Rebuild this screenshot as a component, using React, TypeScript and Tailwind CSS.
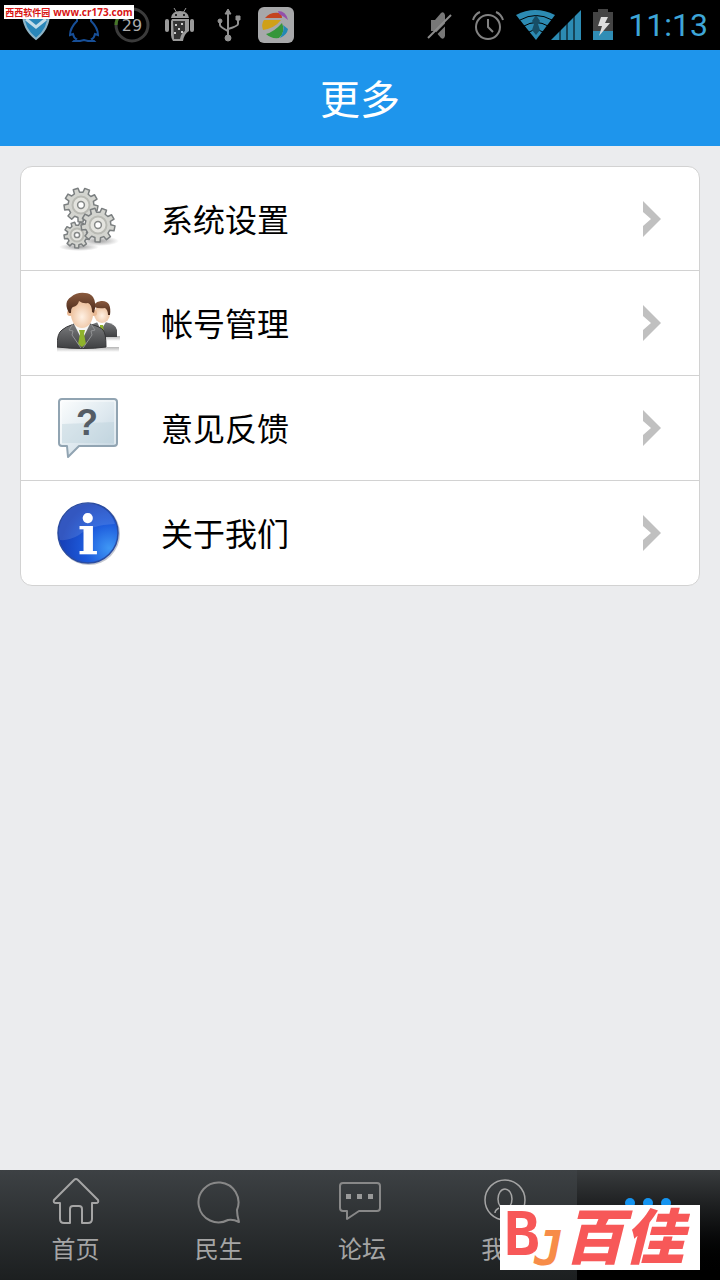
import type { ReactNode } from "react";

interface MenuEntry {
  label: string;
  icon: ReactNode;
}

interface TabEntry {
  label: string;
  icon: ReactNode;
}

function gearPath(cx: number, cy: number, outer: number, inner: number, teeth: number) {
  const step = (Math.PI * 2) / teeth;
  const points: string[] = [];
  for (let i = 0; i < teeth; i++) {
    const base = i * step + 0.2;
    [
      [inner, -0.31],
      [outer, -0.21],
      [outer, 0.21],
      [inner, 0.31],
    ].forEach(([r, part]) => {
      const a = base + part * step;
      points.push(`${(cx + r * Math.cos(a)).toFixed(1)} ${(cy + r * Math.sin(a)).toFixed(1)}`);
    });
  }
  return `M${points.join("L")}Z`;
}

function Gear({ cx, cy, r }: { cx: number; cy: number; r: number }) {
  return (
    <g>
      <path d={gearPath(cx, cy, r, r * 0.76, 9)} fill="#d3d4cf" stroke="#7b7f80" strokeWidth="1.5" strokeLinejoin="round" />
      <circle cx={cx} cy={cy} r={r * 0.5} fill="#e4e4df" stroke="#b9bab4" strokeWidth="2" />
      <circle cx={cx} cy={cy} r={r * 0.2} fill="#fff" stroke="#858887" strokeWidth="1.5" />
    </g>
  );
}

function SettingsIcon() {
  return (
    <svg className="h-16 w-16 shrink-0" viewBox="0 0 64 64">
      <defs>
        <radialGradient id="gearShadow">
          <stop offset="0" stopColor="#777" stopOpacity="0.7" />
          <stop offset="1" stopColor="#777" stopOpacity="0" />
        </radialGradient>
      </defs>
      <ellipse cx="22" cy="60" rx="20" ry="4" fill="url(#gearShadow)" />
      <ellipse cx="42" cy="54" rx="20" ry="5" fill="url(#gearShadow)" />
      <Gear cx={24} cy={18} r={17} />
      <Gear cx={20} cy={48} r={13} />
      <Gear cx={41} cy={38} r={17} />
    </svg>
  );
}

function AccountIcon() {
  return (
    <svg className="h-16 w-16 shrink-0" viewBox="0 0 64 64">
      <defs>
        <linearGradient id="suit" x1="0" y1="0" x2="0" y2="1">
          <stop offset="0" stopColor="#7a7b7d" />
          <stop offset="1" stopColor="#3f4042" />
        </linearGradient>
        <radialGradient id="skin" cx="0.5" cy="0.6">
          <stop offset="0" stopColor="#fff1e4" />
          <stop offset="1" stopColor="#eec4a2" />
        </radialGradient>
        <linearGradient id="hair" x1="0" y1="0" x2="0" y2="1">
          <stop offset="0" stopColor="#8a5a3e" />
          <stop offset="1" stopColor="#4a2a1b" />
        </linearGradient>
        <linearGradient id="floor" x1="0" y1="0" x2="0" y2="1">
          <stop offset="0" stopColor="#b5b5b5" />
          <stop offset="1" stopColor="#fff" />
        </linearGradient>
      </defs>
      <rect x="40" y="45" width="23" height="5" fill="url(#floor)" />
      <rect x="0" y="56" width="62" height="5" fill="url(#floor)" />
      <path d="M32 46V38q2-5 9-7h7q11 2 12 8v7Z" fill="url(#suit)" />
      <path d="m40 31 4 8 5-8Z" fill="#fff" />
      <path d="m43 34 3 0 1 9-4 1Z" fill="#8fb32c" />
      <ellipse cx="45" cy="23" rx="8" ry="9" fill="url(#skin)" />
      <path d="M37 20q-2-9 7-10 11-1 9 14l-2 0q0-5-3-7-6 1-11-1Z" fill="url(#hair)" />
      <path d="M0 56q0-14 5-17 3-3 12-6h16q11 3 13 6 3 3 3 17-22 3-49 0Z" fill="url(#suit)" stroke="#363638" />
      <path d="m17 33 8 16 8-16Z" fill="#f7f7f5" />
      <path d="m22 39 6 0-1 4 2 10-4 3-4-3 2-10Z" fill="#8fb32c" />
      <path d="m16 33-4 6 4 1-1 4 9 13M34 33l4 6-4 1 1 4-9 13" fill="none" stroke="#929395" />
      <circle cx="13" cy="22" r="3" fill="#e9b994" />
      <circle cx="37" cy="22" r="3" fill="#e9b994" />
      <ellipse cx="25" cy="23" rx="11" ry="14" fill="url(#skin)" />
      <path d="M12 22Q6 11 14 6q6-5 14-4 5 0 8 4 4 6 1 16l-2-1q0-7-4-9-5 1-9-2-1 5-6 6-2 1-2 6Z" fill="url(#hair)" />
    </svg>
  );
}

function FeedbackIcon() {
  return (
    <svg className="h-16 w-16 shrink-0" viewBox="0 0 64 64">
      <defs>
        <linearGradient id="bubble" x1="0" y1="0" x2="1" y2="1">
          <stop offset="0" stopColor="#fdfefe" />
          <stop offset="0.5" stopColor="#e0eaf0" />
          <stop offset="1" stopColor="#bfd2de" />
        </linearGradient>
      </defs>
      <path
        d="M5 3h52q3 0 3 3v41q0 3-3 3H22L11 61l-1-11H5q-3 0-3-3V6q0-3 3-3Z"
        fill="url(#bubble)"
        stroke="#91a4b2"
        strokeWidth="2"
        strokeLinejoin="round"
      />
      <path d="M5 28q26-1 52-2v21H5Z" fill="#b9cfda" opacity="0.4" />
      <path d="M4 48V5h54v43" fill="none" stroke="#fff" opacity="0.8" />
      <text x="30" y="39" textAnchor="middle" fill="#555d66" className="font-['Liberation_Sans',sans-serif] text-[36px] font-bold">
        ?
      </text>
    </svg>
  );
}

function AboutIcon() {
  return (
    <svg className="h-16 w-16 shrink-0 overflow-visible" viewBox="0 0 64 64">
      <defs>
        <radialGradient id="ball" cx="0.85" cy="0.75" r="0.8">
          <stop offset="0" stopColor="#3f97f5" />
          <stop offset="0.5" stopColor="#1d5bdc" />
          <stop offset="1" stopColor="#1740b8" />
        </radialGradient>
      </defs>
      <circle cx="32" cy="33" r="31" fill="#c3c6cf" />
      <circle cx="31" cy="32" r="30" fill="url(#ball)" stroke="#2b4ca0" strokeWidth="1.5" />
      <path d="M3 39A28 28 0 0 1 58 23Q34 24 22 34 12 40 3 39Z" fill="#fff" opacity="0.12" />
      <text x="31" y="53" textAnchor="middle" fill="#fff" className="font-['DejaVu_Serif',serif] text-[54px] font-bold">
        i
      </text>
    </svg>
  );
}

const MENU: MenuEntry[] = [
  { label: "系统设置", icon: <SettingsIcon /> },
  { label: "帐号管理", icon: <AccountIcon /> },
  { label: "意见反馈", icon: <FeedbackIcon /> },
  { label: "关于我们", icon: <AboutIcon /> },
];

const TABS: TabEntry[] = [
  {
    label: "首页",
    icon: (
      <path
        d="M22 3q2-2 4 0l20 20q1 3-2 3h-4v16q0 4-4 4h-6V32q0-3-3-3h-6q-3 0-3 3v14h-6q-4 0-4-4V26H4q-3 0-2-3Z"
        strokeWidth="2"
      />
    ),
  },
  {
    label: "民生",
    icon: <path d="M33 43A20 20 0 1 1 42 33q0 5 2 12-6-3-11-2Z" strokeWidth="2" stroke="#888" />,
  },
  {
    label: "论坛",
    icon: (
      <>
        <path d="M5 6h34q3 0 3 3v22q0 3-3 3H21L9 42v-8H5q-3 0-3-3V9q0-3 3-3Z" strokeWidth="2" stroke="#888" />
        <path d="M8 17h5v5H8zM19 17h5v5h-5zM30 17h5v5h-5z" fill="#999" stroke="none" />
      </>
    ),
  },
  {
    label: "我的",
    icon: (
      <>
        <circle cx="24" cy="23" r="20" />
        <ellipse cx="24" cy="22" rx="7" ry="10" />
        <path d="M14 36q0-3 4-5M34 36q0-3-4-5" />
      </>
    ),
  },
];

function StatusBar() {
  return (
    <div className="flex h-[50px] items-center bg-black px-3">
      <svg className="h-12 w-12" viewBox="0 0 48 48">
        <path d="M24 7q6 5 13 5 0 16-13 26-13-10-13-26 7 0 13-5Z" fill="#2a86b8" stroke="#8eb4c6" strokeWidth="2" />
        <path d="m14 18 10 8 10-8" fill="none" stroke="#c3dce8" strokeWidth="3" />
      </svg>
      <svg className="h-12 w-12" viewBox="0 0 48 48">
        <path
          d="M17 14q0-8 7-8t7 8v6q7 7 7 14l-3-1q-1 4-3 5l2 2h-6l-4-1-4 1h-6l2-2q-2-1-3-5l-3 1q0-7 7-14Z"
          fill="none"
          stroke="#174f98"
          strokeWidth="2"
        />
      </svg>
      <svg className="h-12 w-12" viewBox="0 0 48 48">
        <circle cx="24" cy="24" r="16" fill="none" stroke="#3b3b3b" strokeWidth="3" />
        <path d="M8 24a16 16 0 0 1 5-11" fill="none" stroke="#477828" strokeWidth="3" />
        <text x="24" y="30" textAnchor="middle" fill="#aaa" className="font-['DejaVu_Sans',sans-serif] text-[16px]">
          29
        </text>
      </svg>
      <svg className="h-12 w-12" viewBox="0 0 48 48" fill="#9a9a9a">
        <path d="M15 17q1-7 9-7t9 7Z" />
        <path d="m18 7 3 5M30 7l-3 5" stroke="#9a9a9a" />
        <circle cx="20" cy="14" r="1" fill="#000" />
        <circle cx="28" cy="14" r="1" fill="#000" />
        <rect x="9" y="18" width="4" height="13" rx="2" />
        <rect x="34" y="18" width="4" height="13" rx="2" />
        <path d="M16 18h17v12q-5 3-6 10H17q-2-3-2-6V20Z" />
        <path d="M17 20h12v10q-4 2-5 8h-6Z" fill="#343434" />
        <path d="M19 23h2v2h-2zM25 22h2v2h-2zM22 27h2v2h-2zM18 31h2v2h-2zM25 30h2v2h-2z" fill="#ccc" />
      </svg>
      <svg className="h-12 w-12" viewBox="0 0 48 48" fill="#929292" stroke="#929292">
        <path d="M24 12v24M16 20v4q0 2 8 6M34 18v5q0 2-10 5" fill="none" strokeWidth="2" />
        <path d="m24 8 3 5h-6ZM32 15h4v4h-4z" />
        <circle cx="16" cy="20" r="2" />
        <circle cx="24" cy="37" r="3" />
      </svg>
      <svg className="h-12 w-12" viewBox="0 0 48 48">
        <rect x="6" y="6" width="36" height="36" rx="6" fill="#a7a8aa" />
        <path d="M13 17q5-6 14-5 3 1 3 5Z" fill="#c4441d" />
        <path d="M11 29q-2-6 1-10h17q-6 8-18 10Z" fill="#d0a018" />
        <path d="M14 33q8-2 16-11 4 9-3 15-8 1-13-4Z" fill="#35963a" />
        <path d="M28 37q5-8 3-13l5 4q-1 6-8 9Z" fill="#2189b5" />
        <path d="M26 10q8 0 10 9-5-4-9-6Z" fill="#9350ab" />
      </svg>

      <svg className="ml-auto h-12 w-12" viewBox="0 0 48 48">
        <path d="M15 19h4l6-7q3-2 4 2v21q-1 4-4 2l-6-7h-4Z" fill="#777" />
        <path d="m14 39 23-23" stroke="#000" strokeWidth="2" />
        <path d="m12 37 23-23" stroke="#8b8b8b" strokeWidth="2" />
      </svg>
      <svg className="h-12 w-12" viewBox="0 0 48 48" fill="none" stroke="#828282" strokeWidth="2">
        <circle cx="24" cy="26" r="12" />
        <path d="M24 18v8l5 5M9 19q2-6 7-8M39 19q-2-6-7-8" />
      </svg>
      <svg className="h-12 w-[72px]" viewBox="0 0 72 48">
        <path d="M4 14q19-10 39 0L24 39Z" fill="#2c8bb3" />
        <path d="M8 19q16-9 32 0M12 25q12-7 24 0M17 31q7-4 14 0" fill="none" stroke="#000" />
        <path d="m24 14 4 6-2 3 2 6-4 5-4-5 2-6-2-3Z" fill="#174e66" />
        <path d="m39 39 30-30v30Z" fill="#2c8bb3" />
        <path d="M48 28v11M55 20v19M62 14v25" stroke="#000" />
      </svg>
      <svg className="h-12 w-10" viewBox="0 0 40 48">
        <path d="M14 8h10v3h5v28H9V11h5Z" fill="#444" />
        <path d="M9 30h20v9H9Z" fill="#308db5" />
        <path d="m17 16 7 0-3 6h5l-11 13 3-10h-4Z" fill="#ddd" />
      </svg>
      <span className="pl-1 font-['Roboto',sans-serif] text-[32px] leading-none text-[#3ea6d8]">11:13</span>
    </div>
  );
}

function MenuRow({ label, icon }: MenuEntry) {
  return (
    <li className="group border-b border-[#d2d2d2] last:border-b-0">
      <button
        type="button"
        className="flex h-[104px] w-full items-center gap-10 pr-9 pl-9 text-left group-first:h-[103px]"
      >
        {icon}
        <span className="flex-1 pb-0.5 text-[32px] leading-10 text-black">{label}</span>
        <svg className="h-9 w-5 shrink-0" viewBox="0 0 20 36">
          <path d="M0 0 18 18 0 36V25l8-7-8-7Z" fill="#c0c0c0" />
        </svg>
      </button>
    </li>
  );
}

function TabBar() {
  return (
    <nav className="flex h-[110px] bg-linear-to-b from-[#3d4144] to-[#1c1f20] pl-1">
      {TABS.map((tab) => (
        <button key={tab.label} type="button" className="flex flex-1 flex-col items-center pt-[7px] text-[#a5a5a5]">
          <svg className="h-12 w-12" viewBox="0 0 48 48" fill="none" stroke="#a5a5a5" strokeWidth="1.5" strokeLinejoin="round">
            {tab.icon}
          </svg>
          <span className="text-[24px] leading-[46px]">{tab.label}</span>
        </button>
      ))}
      <button
        type="button"
        aria-label="更多"
        className="flex flex-1 flex-col items-center bg-linear-to-b from-[#393c3e] to-black pt-[7px]"
      >
        <svg className="h-12 w-12" viewBox="0 0 48 48" fill="#1594f0">
          <circle cx="6" cy="26" r="5" />
          <circle cx="24" cy="26" r="5" />
          <circle cx="42" cy="26" r="5" />
        </svg>
      </button>
    </nav>
  );
}

export default function App() {
  return (
    <div className="relative flex min-h-screen flex-col bg-[#ebecee] font-['Noto_Sans_CJK_SC',sans-serif]">
      <StatusBar />
      <header className="flex h-24 items-center justify-center bg-[#1e95ec]">
        <h1 className="pb-0.5 text-[40px] leading-none text-white">更多</h1>
      </header>

      <main className="flex-1 p-5">
        <ul className="overflow-hidden rounded-xl border border-[#d2d2d2] bg-white">
          {MENU.map((entry) => (
            <MenuRow key={entry.label} {...entry} />
          ))}
        </ul>
      </main>

      <TabBar />

      <div className="absolute top-[5px] left-1 flex h-3.5 w-[130px] items-center justify-center gap-[3px] bg-white text-[#d81414]">
        <span className="text-[9px] leading-none font-bold whitespace-nowrap">西西软件园</span>
        <span className="font-['Open_Sans',sans-serif] text-[10px] leading-none font-bold">www.cr173.com</span>
      </div>

      <svg className="absolute right-5 bottom-2.5 h-[65px] w-[200px] overflow-visible bg-white" viewBox="0 0 200 65">
        <text x="4" y="50" fill="#f75858" className="font-['DejaVu_Sans_Mono',monospace] text-[60px] font-bold">
          B
        </text>
        <text
          x="34"
          y="60"
          fill="#f78c48"
          stroke="#fff"
          strokeWidth="3"
          paintOrder="stroke"
          className="font-['DejaVu_Sans_Mono',monospace] text-[48px] font-bold italic"
        >
          J
        </text>
        <text x="64" y="54" fill="#f75858" className="text-[60px] font-black italic">
          百佳
        </text>
      </svg>
    </div>
  );
}
